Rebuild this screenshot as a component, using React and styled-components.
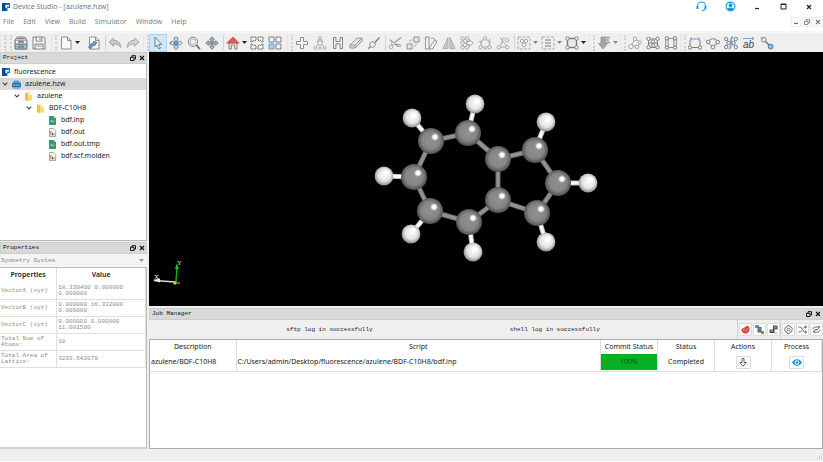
import React from 'react';
import styled, { createGlobalStyle, css } from 'styled-components';

const sans = '"Noto Sans", "Open Sans", sans-serif';
const mono = '"Liberation Mono", "DejaVu Sans Mono", monospace';

const GlobalStyle = createGlobalStyle`
  *, *::before, *::after { box-sizing: border-box; }
  body { margin: 0; background: #fff; font: 7px/12px ${sans}; color: #333; }
  button { font: inherit; color: inherit; padding: 0; margin: 0; border: 0; background: none; }
  h2, ul, p { margin: 0; padding: 0; font: inherit; list-style: none; }
  svg { display: block; flex: none; }
`;

const Window = styled.div`
  display: flex;
  flex-direction: column;
  min-height: 100vh;
  padding-bottom: 1px;
`;

const TitleBar = styled.header`
  display: flex;
  align-items: center;
  height: 13px;
  padding: 0 8px 0 2px;
  gap: 3px;
  background: #fff;
`;
const Title = styled.span`
  flex: 1;
  color: #777;
`;
const WindowButtons = styled.div`
  display: flex;
  gap: 14px;
`;
const WindowButton = styled.button`
  display: flex;
  justify-content: center;
  align-items: center;
  width: 12px;
  height: 13px;
`;
const AccountButtons = styled.div`
  display: flex;
  gap: 17px;
  margin-right: 12px;
`;

const MenuBar = styled.nav`
  display: flex;
  align-items: center;
  height: 18px;
  padding: 0 0 0 3px;
  gap: 9px;
  background: #fff;
`;
const MenuItem = styled.button`
  color: #808080;
  line-height: 16px;
`;
const MdiButtons = styled.div`
  display: flex;
  gap: 1px;
  margin-left: auto;
`;
const MdiButton = styled.button`
  display: flex;
  align-items: center;
  justify-content: center;
  width: 10px;
  height: 10px;
  border: 1px solid #eee;
`;

const ToolBar = styled.div`
  display: flex;
  height: 21px;
  background: #efefef;
  border-top: 2px solid #f6f6f6;
`;
const ToolGroup = styled.div`
  display: flex;
  align-items: center;
  padding-right: ${(p) => p.$end || 0}px;
`;
const Grip = styled.span`
  width: 6px;
  height: 16px;
  border-right: 2px dotted #d2d2d2;
  border-left: 1px solid #e4e4e4;
`;
const ToolButton = styled.button`
  display: flex;
  align-items: center;
  justify-content: center;
  width: 18px;
  height: 18px;
  border: 1px solid transparent;
  ${(p) => p.$active && css`
    background: #cce8ff;
    border-color: #a6d5fa;
  `}
`;
const DropButton = styled.button`
  display: flex;
  align-items: center;
  width: ${(p) => (p.$wide ? 10 : 6)}px;
  height: 18px;
`;
const Separator = styled.span`
  width: 3px;
  height: 15px;
  border-right: 1px solid #d4d4d4;
`;

const Workspace = styled.main`
  flex: 1;
  display: grid;
  grid-template-columns: 147px minmax(0, 1fr);
  gap: 2px;
  background: #efefef;
`;
const SideColumn = styled.div`
  display: flex;
  flex-direction: column;
  gap: 1px;
`;
const Dock = styled.section`
  display: flex;
  flex-direction: column;
  flex: ${(p) => p.$share} 1 0;
`;
const DockBar = styled.header`
  display: flex;
  align-items: center;
  justify-content: space-between;
  height: 12px;
  padding: 0 0 0 2px;
  background: #d9d9d9;
  border: 1px solid #cecece;
`;
const DockTitle = styled.h2`
  font: 6px/10px ${mono};
  color: #111;
`;
const DockActions = styled.div`
  display: flex;
  gap: 1px;
`;
const DockAction = styled.button`
  display: flex;
  align-items: center;
  justify-content: center;
  width: 8px;
  height: 10px;
`;

const Tree = styled.ul`
  flex: 1;
  background: #fff;
  border-right: 1px solid #b9b9b9;
  border-bottom: 1px solid #b9b9b9;
  && { padding-top: 2px; }
`;
const TreeRow = styled.li`
  display: flex;
  align-items: center;
  height: 12px;
  gap: 2px;
  padding-left: ${(p) => p.$depth * 12}px;
  color: #222;
  background: ${(p) => (p.$selected ? '#d9d9d9' : 'transparent')};
`;
const TreeToggle = styled.button`
  display: flex;
  justify-content: center;
  width: 10px;
`;
const TreeLabel = styled.span`
  padding-left: ${(p) => p.$space || 0}px;
`;

const SymmetryField = styled.label`
  display: flex;
  align-items: center;
  height: 13px;
  padding-right: 3px;
  background: #f4f4f4;
`;
const SymmetrySelect = styled.select`
  flex: 1;
  appearance: none;
  border: 0;
  padding: 0 1px;
  background: transparent;
  font: 6px/12px ${mono};
  color: #888;
`;
const PropertyPane = styled.div`
  flex: 1;
  background: #fff;
  border: 1px solid #b9b9b9;
  border-left: 0;
  border-bottom: 2px solid #cfcfcf;
`;
const PropertyTable = styled.table`
  width: 100%;
  table-layout: fixed;
  border-collapse: collapse;
`;
const PropertyHead = styled.th`
  width: ${(p) => p.$width || 'auto'};
  height: 14px;
  padding: 0;
  font-weight: 600;
  color: #222;
  border-right: 1px solid #dedede;
`;
const PropertyCell = styled.td`
  height: 17px;
  padding: 0 1px;
  font: 6px/6px ${mono};
  color: #8c8c8c;
  border-right: 1px solid #dedede;
  border-bottom: 1px solid #dedede;
`;

const ContentColumn = styled.div`
  display: flex;
  flex-direction: column;
  gap: 2px;
  min-width: 0;
`;
const Viewport = styled.section`
  position: relative;
  flex: 254 1 0;
  min-height: 0;
  background: #000;
`;
const MoleculeScene = styled.svg`
  position: absolute;
  inset: 0;
  width: 100%;
  height: 100%;
`;
const AxisScene = styled.svg`
  position: absolute;
  left: 3px;
  bottom: 16px;
`;

const LogBar = styled.div`
  display: flex;
  height: 19px;
`;
const LogMessages = styled.div`
  flex: 1;
  display: flex;
  align-items: center;
  justify-content: space-evenly;
  font: 6px/12px ${mono};
  color: #222;
`;
const LogTools = styled.div`
  display: flex;
  align-items: center;
  gap: 1px;
  padding-left: 1px;
  border-left: 1px solid #d0d0d0;
`;
const BoxButton = styled.button`
  display: flex;
  align-items: center;
  justify-content: center;
  width: 13px;
  height: 13px;
  background: #fdfdfd;
  border: 1px solid #dcdcdc;
  border-radius: 1px;
`;
const JobPane = styled.div`
  flex: 1;
  background: #fff;
  border: 1px solid #a9a9b0;
`;
const JobTable = styled.table`
  width: 100%;
  table-layout: fixed;
  border-collapse: collapse;
  color: #222;
`;
const JobHead = styled.th`
  width: ${(p) => (p.$width ? `${p.$width}px` : 'auto')};
  height: 14px;
  padding: 0;
  font-weight: 400;
  border-right: 1px solid #dedede;
`;
const JobCell = styled.td`
  height: 17px;
  padding: 0 ${(p) => (p.$center ? 0 : 1)}px;
  text-align: ${(p) => (p.$center ? 'center' : 'left')};
  white-space: nowrap;
  border-right: 1px solid #dedede;
  border-bottom: 1px solid #dedede;
`;
const CommitProgress = styled.div`
  height: 16px;
  line-height: 16px;
  background: #06b025;
  color: #124d1d;
`;
const CellButton = styled(BoxButton)`
  width: 15px;
  margin: 0 auto;
`;

const StatusBar = styled.footer`
  display: flex;
  align-items: flex-end;
  justify-content: flex-end;
  height: 12px;
  background: #efefef;
`;

const dark = '#757575';
const soft = '#a2a2a2';
const blue = '#5b9bd0';

const ring = (x, y, r = 1.7) => <circle cx={x} cy={y} r={r} fill="#f4f4f4" />;

const toolArt = {
  server: [dark, <><path d="M3.2 1h7.6l2 3.200v8.800H1.200V4.200z" fill="#e4e4e4" /><path d="M1.200 4.200h11.600v4H1.200z" fill="#f8f8f8" /><path d="M1.200 8.200h11.600V13H1.200z" fill="#9dbdd6" /><path d="M4.500 5.500h5v1.200h-5zM4.500 10h5v1.200h-5zM3.500 2.500h7" /></>],
  save: [dark, <><path d="M1 1h10.800L13 2.200V13H1z" fill="#f8f8f8" /><path d="M4 1v4.200h6V1M8 2v2M3 13V8h8v5" /><path d="M4 10h6" stroke={blue} /></>],
  page: ['#858585', <path d="M2.500 1h6l3.500 3.500V13h-9.500zM8.500 1v3.500h3.500" fill="#fafafa" />],
  importPage: ['#858585', <><path d="M2.500 1h6l3.500 3.500V13h-9.500zM8.500 1v3.500h3.500" fill="#fafafa" /><path d="M1.500 11.500l2.500-4 1.500.5 1.500-3 3 1.500-2 3-2 .3-2 2.700z" fill={blue} stroke="#4a7ca8" strokeWidth=".7" /></>],
  undo: [soft, <path d="M1 6l4.500-4v2.300c4.500 0 7 2.200 7.300 7.200-1.600-2.500-3.800-3.600-7.300-3.500v2.300z" fill="#c8c8c8" />],
  redo: [soft, <path d="M13 6L8.500 2v2.300c-4.500 0-7 2.200-7.300 7.200 1.600-2.500 3.800-3.600 7.300-3.500v2.300z" fill="#d4d4d4" />],
  cursor: [dark, <path d="M4 1l7 7.500H7.800l1.700 3.700-1.700.8-1.700-3.800L4 11z" fill="#dcecf8" />],
  orbit: [dark, <><path d="M4.500 5C2.500 5.300 1 6 1 7c0 1.300 3 2.200 6 2.200s6-.9 6-2.200c0-1-1.500-1.700-3.500-2M2.300 8.800L1 7.300l1.900-.8" /><path d="M5.800 4V2.500H4.700L7 .5l2.300 2H8.200V4M5.800 10v1.500H4.700l2.300 2 2.300-2H8.200V10" fill="#f6f6f6" /><circle cx="7" cy="7" r="2.300" fill={blue} stroke="#4f86b5" /></>],
  zoom: [dark, <><circle cx="6" cy="5.800" r="4.600" fill="#f4f4f4" /><circle cx="6" cy="5.800" r="2.800" fill="none" strokeWidth=".5" /><path d="M9.400 9.200l3.600 3.900" strokeWidth="1.800" /></>],
  pan: [dark, <><path d="M7 .8l2.300 2.500H8v2.700h2.700V4.700L13.200 7l-2.500 2.300V8H8v2.700h1.300L7 13.200l-2.300-2.500H6V8H3.300v1.300L.8 7l2.500-2.300V6H6V3.300H4.700z" fill="#b9bec2" /><circle cx="7" cy="7" r="1.800" fill={blue} stroke="none" /></>],
  home: ['#777', <><path d="M3 7h8v6H8.700V9H5.300v4H3z" fill="#eee" /><path d="M.8 7L7 1l6.200 6z" fill="#dd5a57" stroke="#c85956" /></>],
  expand: [dark, <path d="M1 1h5v3L4.800 5.200 3.600 4 2.200 6H1zM13 1H8v3l1.200 1.200L10.400 4l1.400 2H13zM1 13h5v-3L4.800 8.800 3.600 10 2.200 8H1zM13 13H8v-3l1.200-1.200 1.200 1.200 1.400-2H13z" fill="#f7f7f7" />],
  tiles: [dark, <><path d="M1 1h5v5H1zM8 1h5v5H8zM8 8h5v5H8z" fill="#f4f4f4" /><path d="M1 8h5v5H1z" fill="#a9d0f0" stroke={blue} /></>],
  plus: ['#858585', <path d="M5.500 1.500h3v4h4v3h-4v4h-3v-4h-4v-3h4z" fill="#f4f4f4" />],
  fragment: [soft, <><path d="M7 7l-4.700 4.500M7 7l4.700 4.500M7 2v5M4 6l3-4 3 4" />{ring(7, 2.2, 1.5)}{ring(7, 7, 2.2)}{ring(2.3, 12, 1.4)}{ring(7, 12, 1.2)}{ring(11.7, 12, 1.4)}</>],
  hydrogen: [dark, <path d="M2.500 1.500h2.400v4h4.200v-4h2.400v11H9.100v-4.600H4.900v4.600H2.500z" fill="#f4f4f4" />],
  eraser: ['#909090', <path d="M1 9l7-7h5v3l-7 7H1zM1 9h5l7-7M6 9v3" fill="#dedede" />],
  brush: ['#858585', <><path d="M7 7.500l5.500-6" strokeWidth="1.500" />{ring(5.5, 8.5, 2.8)}<path d="M1.200 12.800l2.500-2.300" strokeWidth="1.300" /></>],
  cut: [soft, <><path d="M1.500 3.500l9 7M13 1.500L5 8" strokeWidth="1.400" />{ring(3, 11, 1.8)}{ring(5, 7.5, 1.6)}<path d="M7 8.500h6M9 10.500h4" stroke="#8f9ba5" /></>],
  replace: ['#888', <><path d="M1 8h5v5H1zM8 1h5v5H8z" fill="#e3e3e3" /><path d="M4 6.500V4h2.500M10 7.500V10H7.500" strokeDasharray="1 1" /></>],
  angle: ['#888', <path d="M1.500 1H5v12H1.500zM5 12.500L10.500 4 13 5.600 8.500 13H5M7 2c2 0 4 1 5 3" fill="#f4f4f4" />],
  mirror: ['#a8a8a8', <path d="M6 1.500V12.500H1zM8 1.500v11h5z" fill="#c9c9c9" />],
  bonded: [soft, <><path d="M3 3h4v8H3zM3 7h4" /><path d="M7 5.500h2.500V3.500L13.300 7 9.500 10.500v-2H7z" fill="#f2f2f2" />{ring(2.5, 2.5)}{ring(7, 2.5)}{ring(2.5, 7)}{ring(2.5, 11.5)}{ring(7, 11.5)}</>],
  ringA: [soft, <><path d="M7 2.500l4 3 .8 5.500H3L3 5.500z" />{ring(7, 2.5)}{ring(2.5, 11.2)}{ring(11.5, 11.2)}<path d="M12 2.500l-1 3 2 1M1 6l2-1 1 2M6 12.700h3" /></>],
  ringB: [soft, <><path d="M4 1l2 3.500V8M8.500 1L6 4.500M3 11l4-6 4.500 6z" />{ring(2.7, 11.2)}{ring(11.3, 11.2)}{ring(11, 4)}</>],
  pickAtoms: [soft, <><rect x="1" y="1" width="12" height="12" fill="none" strokeDasharray="3 1.500" />{ring(5, 5, 1.7)}{ring(9, 5, 1.7)}{ring(7, 9, 2)}</>],
  pickLines: [soft, <><rect x="1" y="1" width="12" height="12" fill="none" strokeDasharray="3 1.500" /><path d="M4 4h6M4 7h6M4 10h6" strokeWidth="1.600" /></>],
  lattice: [dark, <><rect x="2.500" y="2.500" width="9" height="9" fill="#e8e8e8" strokeWidth="1.300" />{ring(2.5, 2.5)}{ring(11.5, 2.5)}{ring(2.5, 11.5)}{ring(11.5, 11.5)}</>],
  download: ['#999', <><path d="M4 1h4v6.500h2.500L6 13 1.500 7.500H4z" fill="#a4a4a4" /><path d="M8 1.500h5M8 4h4M8 6.500h5" strokeWidth="1.400" /></>],
  cluster: [soft, <><path d="M7 3L3 10h7l2-4z" />{ring(7, 2.8, 1.8)}{ring(3, 10.5, 2.2)}{ring(9, 11, 1.8)}{ring(12, 6.5, 1.5)}</>],
  crystal: [dark, <><path d="M2.500 3h9v8.500h-9zM2.500 7h9" />{ring(2.5, 2.8)}{ring(11.5, 2.8)}{ring(7, 5.5)}{ring(2.5, 11.2)}{ring(7, 9.5)}{ring(11.5, 11.2)}</>],
  device: [dark, <><path d="M1.700 2v10M4.200 2v10M9.800 2v10M12.300 2v10M3 2.500h8M3 11.500h8" strokeWidth=".8" />{ring(3, 2.3)}{ring(11, 2.3)}{ring(3, 11.7)}{ring(11, 11.7)}</>],
  distance: [dark, <><path d="M2 4v7M12 4v7M3 11.500h8" /><path d="M2 3h10M4 1.500L2.300 3 4 4.500M10 1.500L11.700 3 10 4.500" stroke={blue} />{ring(2, 11.5)}{ring(12, 11.5)}</>],
  measureAngle: [dark, <><path d="M2.300 6.500l4.700 5 4.700-5" /><path d="M4 4c1.500-1.700 4.500-1.700 6 0" stroke={blue} strokeWidth="1.200" />{ring(2.3, 6, 1.8)}{ring(11.7, 6, 1.8)}{ring(7, 11, 1.9)}</>],
  dihedral: [dark, <><path d="M2 3l3 4-3 4M12 3L9 7l3 4" /><path d="M9 1C4 3 10 10 5 13" stroke={blue} strokeWidth="1.500" />{ring(2.2, 3)}{ring(4.5, 7)}{ring(2.2, 11)}{ring(11.8, 3)}{ring(9.5, 7)}{ring(11.8, 11)}</>],
  vector: ['#555', <><path d="M1 2.500h11M10 1l2 1.500L10 4" stroke={blue} /><text x="1" y="12" fontSize="10" fontStyle="italic" fontFamily="Liberation Sans" fill="#444" stroke="none">ab</text></>],
  bondLink: [dark, <><path d="M4 4l6 6" strokeWidth="1.500" />{ring(3.7, 3.7, 2.3)}<path d="M1 1.500l2 2" /><circle cx="10.600" cy="10.600" r="2.400" fill="#8fbde2" stroke="#3c6f9d" /></>],
};

function ToolIcon({ name }) {
  const [stroke, art] = toolArt[name];
  return (
    <svg width="14" height="14" viewBox="0 0 14 14" fill="none" stroke={stroke} strokeWidth=".9" aria-hidden="true">{art}</svg>
  );
}

const Tool = ({ name, label, active }) => (
  <ToolButton type="button" aria-label={label} $active={active}><ToolIcon name={name} /></ToolButton>
);
const Drop = ({ wide, muted, label }) => (
  <DropButton type="button" aria-label={label} $wide={wide}>
    <svg width="5" height="3" viewBox="0 0 5 3"><path d="M0 0h5L2.500 3z" fill={muted ? '#888' : '#222'} /></svg>
  </DropButton>
);

function AppLogo() {
  return (
    <svg width="8" height="8" viewBox="0 0 8 8" aria-hidden="true">
      <path d="M0 0h8v8H0z" fill="#0874c8" />
      <path d="M0 0h3.500v8H0z" fill="#064b91" />
      <path d="M3.500 2H7v1.500H5V5H3.500zM5.500 5H8v3H5.500z" fill="#fff" />
    </svg>
  );
}
function RestoreIcon({ color = '#111' }) {
  return (
    <svg width="6" height="6" viewBox="0 0 6 6" fill="none" stroke={color}>
      <path d="M2 2V.7h3.500V4H4" /><path d="M.5 2.300H4v3.200H.5z" />
    </svg>
  );
}
function CloseIcon({ color = '#111' }) {
  return <svg width="6" height="6" viewBox="0 0 6 6"><path d="M1 1l4 4M5 1L1 5" stroke={color} strokeWidth="1.200" /></svg>;
}
function MinimizeIcon({ color = '#222' }) {
  return <svg width="6" height="6" viewBox="0 0 6 6"><path d="M1 4.500h4" stroke={color} strokeWidth="1.200" /></svg>;
}
function TreeIcon({ kind }) {
  if (kind === 'app') return <AppLogo />;
  return (
    <svg width="9" height="9" viewBox="0 0 9 9" aria-hidden="true">
      {kind === 'project' && <><path d="M2 .5h5l1 2.500H1z" fill="#5e9fce" /><rect y="2.800" width="9" height="4.700" rx="1" fill="#1b75bb" /><path d="M1.500 5h1.800M4 5h1.500M6.200 5h1.500" stroke="#b9d9f0" strokeWidth="1.200" /><path d="M1.500 7.500h6V9h-6z" fill="#7ab0d6" /></>}
      {kind === 'folder' && <><path d="M1 .5h5v8H1z" fill="#ffe08a" /><path d="M1 .5l3 1v7.500L1 8z" fill="#f0be45" /><path d="M5 3h3v5.500H4z" fill="#fbd672" /></>}
      {kind === 'input' && <><path d="M1 0h5l2 2v7H1z" fill="#43936f" /><path d="M6 0v2h2" fill="#b9dccb" /><path d="M2.500 5.500L4 4.500l1 1.500 1.500-1" stroke="#d7efe3" fill="none" strokeWidth=".8" /></>}
      {kind === 'output' && <><path d="M1.500.5h4.200l2 2v6H1.500z" fill="#fff" stroke="#8f8f8f" strokeWidth=".8" /><path d="M3 3v4.500" stroke="#d3553c" /><path d="M4.600 4.500v3" stroke="#555" /><path d="M6.200 5.500v2" stroke="#d3553c" /></>}
    </svg>
  );
}

const carbons = [[282, 89], [319, 81], [349, 107], [386, 98], [409, 131], [388, 161], [349, 148], [320, 170], [281, 159], [265, 125]];
const hydrogens = [[263, 66, 0], [326, 52, 1], [397, 70, 3], [439, 131, 4], [397, 190, 5], [324, 200, 7], [262, 182, 8], [235, 124, 9]];
const bonds = [[0, 1], [1, 2], [2, 3], [3, 4], [4, 5], [5, 6], [6, 7], [7, 8], [8, 9], [9, 0], [2, 6]];

function Molecule() {
  return (
    <MoleculeScene viewBox="0 0 674 254" role="img" aria-label="Azulene molecule">
      <defs>
        <radialGradient id="carbon" cx=".5" cy=".48" r=".52">
          <stop offset="0" stopColor="#919191" /><stop offset=".65" stopColor="#858585" /><stop offset="1" stopColor="#4d4d4d" />
        </radialGradient>
        <radialGradient id="hydrogen" cx=".52" cy=".45" r=".55">
          <stop offset="0" stopColor="#fafafa" /><stop offset=".6" stopColor="#e4e4e4" /><stop offset="1" stopColor="#8b8b8b" />
        </radialGradient>
        <radialGradient id="shine">
          <stop offset="0" stopColor="#fff" /><stop offset=".45" stopColor="#fff" stopOpacity=".95" /><stop offset="1" stopColor="#fff" stopOpacity="0" />
        </radialGradient>
      </defs>
      {bonds.map(([a, b]) => (
        <g key={`${a}-${b}`}>
          <line x1={carbons[a][0]} y1={carbons[a][1]} x2={carbons[b][0]} y2={carbons[b][1]} stroke="#707070" strokeWidth="5" />
          <line x1={carbons[a][0]} y1={carbons[a][1]} x2={carbons[b][0]} y2={carbons[b][1]} stroke="#929292" strokeWidth="3" />
        </g>
      ))}
      {hydrogens.map(([x, y, c]) => (
        <g key={`${x}-${y}`}>
          <line x1={carbons[c][0]} y1={carbons[c][1]} x2={x} y2={y} stroke="#bcbcbc" strokeWidth="5" />
          <line x1={carbons[c][0]} y1={carbons[c][1]} x2={x} y2={y} stroke="#fff" strokeWidth="3" />
        </g>
      ))}
      {carbons.map(([x, y]) => (
        <g key={`${x}-${y}`}>
          <circle cx={x} cy={y} r="13" fill="url(#carbon)" />
          <circle cx={x + 4} cy={y - 4} r="4" fill="url(#shine)" />
        </g>
      ))}
      {hydrogens.map(([x, y]) => (
        <g key={`${x}-${y}`}>
          <circle cx={x} cy={y} r="9.400" fill="url(#hydrogen)" />
          <circle cx={x + 2} cy={y - 3} r="4" fill="url(#shine)" />
        </g>
      ))}
    </MoleculeScene>
  );
}

function Axes() {
  return (
    <AxisScene width="34" height="32" viewBox="0 0 34 32" aria-hidden="true">
      <path d="M24 24L2 22.500" stroke="#ddd" strokeWidth="1.500" />
      <path d="M1 22l7-1.500v4z" fill="#eee" />
      <path d="M24 24l1-15" stroke="#0bb50b" strokeWidth="1.500" />
      <path d="M23 11l2-6 2 6z" fill="#14c514" />
      <circle cx="23" cy="25" r="1.800" fill="#d5cb00" /><path d="M25 25h3" stroke="#ddd217" />
      <text x="2" y="21" fontSize="7" fontFamily="Liberation Serif" fill="#fff">X</text>
      <text x="25" y="7" fontSize="7" fontFamily="Liberation Serif" fill="#ddd">Y</text>
    </AxisScene>
  );
}

const DockHeader = ({ title }) => (
  <DockBar>
    <DockTitle>{title}</DockTitle>
    <DockActions>
      <DockAction type="button" aria-label={`Float ${title}`}><RestoreIcon /></DockAction>
      <DockAction type="button" aria-label={`Close ${title}`}><CloseIcon /></DockAction>
    </DockActions>
  </DockBar>
);

const treeRows = [
  { label: 'azulene.hzw', kind: 'project', depth: 0, open: true, selected: true },
  { label: 'azulene', kind: 'folder', depth: 1, open: true },
  { label: 'BDF-C10H8', kind: 'folder', depth: 2, open: true },
  { label: 'bdf.inp', kind: 'input', depth: 3 },
  { label: 'bdf.out', kind: 'output', depth: 3 },
  { label: 'bdf.out.tmp', kind: 'input', depth: 3 },
  { label: 'bdf.scf.molden', kind: 'output', depth: 3 },
];

const properties = [
  ['VectorA (xyz)', '18.330400 0.000000 0.000000'],
  ['VectorB (xyz)', '0.000000 16.332000 0.000000'],
  ['VectorC (xyz)', '0.000000 0.000000 11.001500'],
  ['Total Num of Atoms:', '18'],
  ['Total Area of Lattice:', '3293.542079'],
];

const menus = ['File', 'Edit', 'View', 'Build', 'Simulator', 'Window', 'Help'];

export default function App() {
  return (
    <>
      <GlobalStyle />
      <Window>
        <TitleBar>
          <AppLogo />
          <Title>Device Studio - [azulene.hzw]</Title>
          <AccountButtons>
            <WindowButton type="button" aria-label="Support">
              <svg width="11" height="11" viewBox="0 0 11 11" fill="none" stroke="#1b9ae0">
                <path d="M1.500 6V5a4 4 0 018 0v1M9.500 7.500C9 9 8 9.500 6 9.700" strokeWidth="1.100" /><path d="M1.500 5v3M9.500 5v3" strokeWidth="2" />
              </svg>
            </WindowButton>
            <WindowButton type="button" aria-label="Account">
              <svg width="11" height="11" viewBox="0 0 11 11">
                <circle cx="5.500" cy="5.500" r="4.400" fill="#fff" stroke="#1b9ae0" strokeWidth="1.200" /><circle cx="5.500" cy="4.200" r="1.900" fill="#1b9ae0" /><path d="M2 8.300c1.500-2.500 5.500-2.500 7 0-2 2.200-5 2.200-7 0z" fill="#1b9ae0" />
              </svg>
            </WindowButton>
          </AccountButtons>
          <WindowButtons>
            <WindowButton type="button" aria-label="Minimize"><MinimizeIcon /></WindowButton>
            <WindowButton type="button" aria-label="Maximize">
              <svg width="7" height="7" viewBox="0 0 7 7"><path d="M1 1h5v5H1zM1 1.500h5" fill="none" stroke="#222" /></svg>
            </WindowButton>
            <WindowButton type="button" aria-label="Close"><CloseIcon color="#222" /></WindowButton>
          </WindowButtons>
        </TitleBar>

        <MenuBar>
          {menus.map((m) => <MenuItem type="button" key={m}>{m}</MenuItem>)}
          <MdiButtons>
            <MdiButton type="button" aria-label="Minimize document"><MinimizeIcon color="#667" /></MdiButton>
            <MdiButton type="button" aria-label="Restore document"><RestoreIcon color="#889" /></MdiButton>
            <MdiButton type="button" aria-label="Close document"><CloseIcon color="#778" /></MdiButton>
          </MdiButtons>
        </MenuBar>

        <ToolBar role="toolbar" aria-label="Main tools">
          <ToolGroup $end={3}>
            <Grip />
            <Grip />
            <Tool name="server" label="Open project" />
            <Tool name="save" label="Save" />
          </ToolGroup>
          <ToolGroup $end={1}>
            <Grip />
            <Tool name="page" label="New file" />
            <Drop label="New file options" wide />
            <Tool name="importPage" label="Import" />
            <Separator />
            <Tool name="undo" label="Undo" />
            <Tool name="redo" label="Redo" />
          </ToolGroup>
          <ToolGroup $end={3}>
            <Grip />
            <Tool name="cursor" label="Select" active />
            <Tool name="orbit" label="Rotate" />
            <Tool name="zoom" label="Zoom" />
            <Tool name="pan" label="Move" />
            <Separator />
            <Tool name="home" label="Home view" />
            <Drop label="View options" />
            <Tool name="expand" label="Fit" />
            <Tool name="tiles" label="Tile windows" />
          </ToolGroup>
          <ToolGroup $end={2}>
            <Grip />
            <Tool name="plus" label="Add atom" />
            <Tool name="fragment" label="Add fragment" />
            <Tool name="hydrogen" label="Add hydrogen" />
            <Tool name="eraser" label="Erase" />
            <Tool name="brush" label="Clean" />
            <Separator />
            <Tool name="cut" label="Cut bond" />
            <Tool name="replace" label="Replace" />
            <Tool name="angle" label="Set angle" />
            <Tool name="mirror" label="Mirror" />
            <Tool name="bonded" label="Move fragment" />
            <Tool name="ringA" label="Rotate about atom" />
            <Tool name="ringB" label="Rotate about axis" />
            <Separator />
            <Tool name="pickAtoms" label="Pick atoms" />
            <Drop label="Pick atoms options" muted />
            <Tool name="pickLines" label="Pick by list" />
            <Drop label="Pick by list options" muted />
            <Tool name="lattice" label="Lattice" />
            <Drop label="Lattice options" />
          </ToolGroup>
          <ToolGroup $end={1}>
            <Grip />
            <Tool name="download" label="Sort layers" />
            <Drop label="Sort layers options" muted />
          </ToolGroup>
          <ToolGroup>
            <Grip />
            <Tool name="cluster" label="Molecule" />
            <Tool name="crystal" label="Crystal" />
            <Tool name="device" label="Device" />
          </ToolGroup>
          <ToolGroup>
            <Grip />
            <Tool name="distance" label="Measure distance" />
            <Tool name="measureAngle" label="Measure angle" />
            <Tool name="dihedral" label="Measure dihedral" />
            <Tool name="vector" label="Measure vector angle" />
            <Tool name="bondLink" label="Bond" />
          </ToolGroup>
        </ToolBar>

        <Workspace>
          <SideColumn>
            <Dock $share={189}>
              <DockHeader title="Project" />
              <Tree role="tree">
                <TreeRow role="treeitem" $depth={0}>
                  <TreeLabel $space={2}><TreeIcon kind="app" /></TreeLabel>
                  <TreeLabel $space={2}>fluorescence</TreeLabel>
                </TreeRow>
                {treeRows.map((r) => (
                  <TreeRow role="treeitem" key={r.label} $depth={r.depth} $selected={r.selected}>
                    <TreeToggle type="button" aria-label={r.label}>
                      {r.open && <svg width="6" height="4" viewBox="0 0 6 4"><path d="M.7.700L3 3 5.300.700" fill="none" stroke="#444" strokeWidth="1.100" /></svg>}
                    </TreeToggle>
                    <TreeIcon kind={r.kind} />
                    <TreeLabel $space={2}>{r.label}</TreeLabel>
                  </TreeRow>
                ))}
              </Tree>
            </Dock>
            <Dock $share={206}>
              <DockHeader title="Properties" />
              <SymmetryField>
                <SymmetrySelect aria-label="Property group" defaultValue="sym">
                  <option value="sym">Symmetry System</option>
                </SymmetrySelect>
                <svg width="5" height="3" viewBox="0 0 5 3"><path d="M0 0h5L2.500 3z" fill="#999" /></svg>
              </SymmetryField>
              <PropertyPane>
                <PropertyTable>
                  <thead>
                    <tr>
                      <PropertyHead scope="col" $width="39%">Properties</PropertyHead>
                      <PropertyHead scope="col">Value</PropertyHead>
                    </tr>
                  </thead>
                  <tbody>
                    {properties.map(([name, value]) => (
                      <tr key={name}><PropertyCell>{name}</PropertyCell><PropertyCell>{value}</PropertyCell></tr>
                    ))}
                  </tbody>
                </PropertyTable>
              </PropertyPane>
            </Dock>
          </SideColumn>

          <ContentColumn>
            <Viewport>
              <Molecule />
              <Axes />
            </Viewport>
            <Dock $share={141}>
              <DockHeader title="Job Manager" />
              <LogBar>
                <LogMessages>
                  <p>sftp log in successfully</p>
                  <p>shell log in successfully</p>
                </LogMessages>
                <LogTools>
                  <BoxButton type="button" aria-label="Stop job">
                    <svg width="9" height="9" viewBox="0 0 9 9"><path d="M.5 4L2.500 3l4-2.500 2 2V6L6 8.500H3L.5 6z" fill="#e0453f" /><path d="M2 5l2-1M4 6l3-2.500" stroke="#f7a39f" strokeWidth=".7" /></svg>
                  </BoxButton>
                  <BoxButton type="button" aria-label="Connect server">
                    <svg width="9" height="9" viewBox="0 0 9 9"><path d="M0 0h4v3H0z" fill="#3f9fe8" /><path d="M2.500 2h4v5.500h-4z" fill="#5c6468" /><path d="M3 4h3" stroke="#bbb" strokeWidth=".6" /><path d="M6 6h3v3H6z" fill="#2fc12f" /></svg>
                  </BoxButton>
                  <BoxButton type="button" aria-label="Disconnect server">
                    <svg width="9" height="9" viewBox="0 0 9 9"><path d="M4 .5h4.500v4H4zM.5 4.500H5V8H.5z" fill="#4b4f66" /><path d="M5 1.500h2.500v1.800H5z" fill="#7c8fc0" /><path d="M1.500 5.500H4v1H1.500z" fill="#b8b36a" /><path d="M5.500 5v3H8" stroke="#999" fill="none" /></svg>
                  </BoxButton>
                </LogTools>
                <LogTools>
                  <BoxButton type="button" aria-label="Settings">
                    <svg width="9" height="9" viewBox="0 0 9 9" fill="none" stroke="#555" strokeWidth=".8"><path d="M3.500.5h2l.4 1.200 1.300.2 1.300 2-.7 1 .1 1.600-1.900.7-.7 1.300h-1.700l-.7-1.300-1.800-.6V5.200L.5 4.200l1-2 1.400-.3z" /><circle cx="4.500" cy="4.500" r="1.500" /></svg>
                  </BoxButton>
                  <BoxButton type="button" aria-label="Transfer">
                    <svg width="9" height="9" viewBox="0 0 9 9" fill="none" stroke="#555" strokeWidth=".9"><path d="M.5 2h2l4 5h2M.5 7h2l1.300-1.500M5.200 3.500L6.500 2h2M7 .7L8.500 2 7 3.300M7 5.700L8.500 7 7 8.300" /></svg>
                  </BoxButton>
                  <BoxButton type="button" aria-label="Refresh">
                    <svg width="9" height="9" viewBox="0 0 9 9" fill="none" stroke="#555" strokeWidth=".9"><path d="M1 4.500C1 2 3 1.500 7.500 2.300M6 .7l1.700 1.600L6 3.800M8 4.500C8 7 6 7.500 1.500 6.700M3 8.300L1.300 6.700 3 5.200M3 4.500h3" /></svg>
                  </BoxButton>
                </LogTools>
              </LogBar>
              <JobPane>
                <JobTable>
                  <thead>
                    <tr>
                      <JobHead scope="col" $width={86}>Description</JobHead>
                      <JobHead scope="col">Script</JobHead>
                      <JobHead scope="col" $width={57}>Commit Status</JobHead>
                      <JobHead scope="col" $width={57}>Status</JobHead>
                      <JobHead scope="col" $width={57}>Actions</JobHead>
                      <JobHead scope="col" $width={50}>Process</JobHead>
                    </tr>
                  </thead>
                  <tbody>
                    <tr>
                      <JobCell>azulene/BDF-C10H8</JobCell>
                      <JobCell>C:/Users/admin/Desktop/fluorescence/azulene/BDF-C10H8/bdf.inp</JobCell>
                      <JobCell $center><CommitProgress>100%</CommitProgress></JobCell>
                      <JobCell $center>Completed</JobCell>
                      <JobCell $center>
                        <CellButton type="button" aria-label="Download results">
                          <svg width="8" height="9" viewBox="0 0 8 9"><path d="M3 .5h2v4h2.200L4 8.300.800 4.500H3z" fill="none" stroke="#444" strokeWidth=".8" /></svg>
                        </CellButton>
                      </JobCell>
                      <JobCell $center>
                        <CellButton type="button" aria-label="View process">
                          <svg width="10" height="7" viewBox="0 0 10 7"><path d="M0 3.500C2.500-.7 7.500-.7 10 3.500 7.500 7.700 2.500 7.700 0 3.500z" fill="#1c93df" /><circle cx="5" cy="3.500" r="2.200" fill="#fff" /><circle cx="5" cy="3.500" r="1.300" fill="#1c93df" /></svg>
                        </CellButton>
                      </JobCell>
                    </tr>
                  </tbody>
                </JobTable>
              </JobPane>
            </Dock>
          </ContentColumn>
        </Workspace>

        <StatusBar>
          <svg width="8" height="8" viewBox="0 0 8 8"><path d="M6 1h1v1H6zM4 3h1v1H4zM6 3h1v1H6zM2 5h1v1H2zM4 5h1v1H4zM6 5h1v1H6z" fill="#bbb" /></svg>
        </StatusBar>
      </Window>
    </>
  );
}
